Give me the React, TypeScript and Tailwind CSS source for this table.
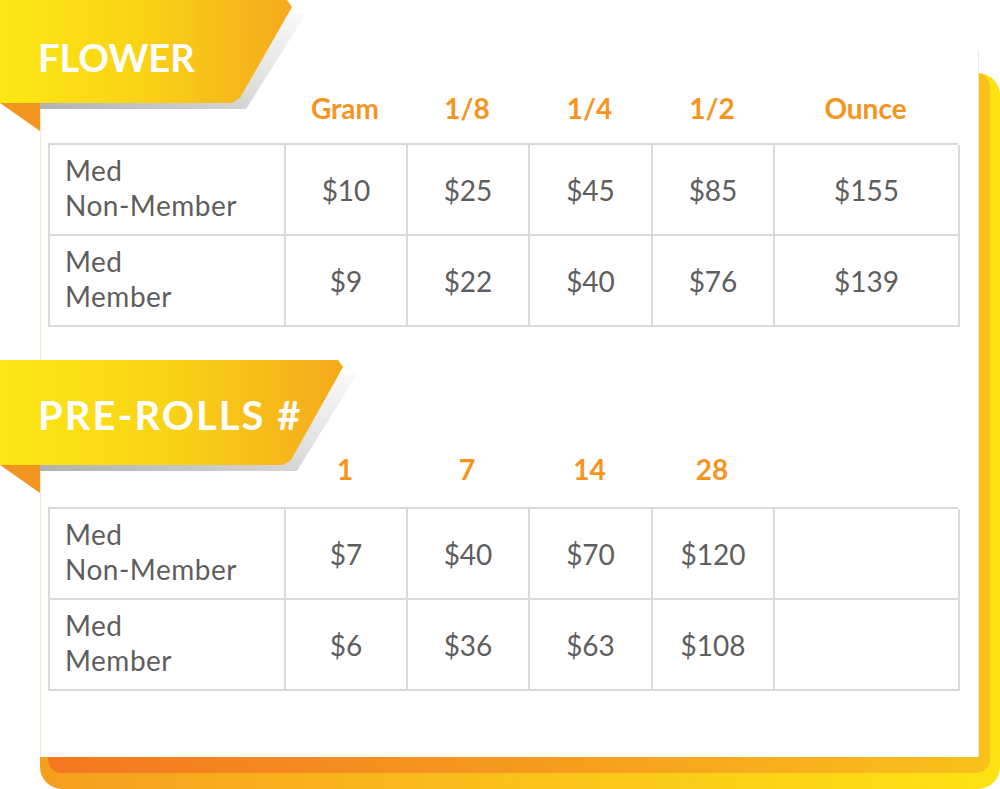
import React from "react";

const COLS = "grid-cols-[236px_122px_122px_123px_122px_185px]";

function Ribbon({
  title,
  width,
  height,
  textClass,
}: {
  title: string;
  width: number;
  height: number;
  textClass: string;
}) {
  const slant = 52;
  const poly = `polygon(0 0, ${width - 5}px 0, ${width}px 7px, ${width - slant}px ${height - 5}px, ${width - slant - 8}px ${height}px, 0 ${height}px)`;
  const shadowPoly = `polygon(40px 0, ${width + 14}px 14px, ${width - slant + 6}px ${height + 6}px, 40px ${height + 6}px)`;
  return (
    <div className="relative -ml-[41px] shrink-0" style={{ width: width + 20, height }}>
      <div
        className="absolute inset-0 bg-linear-to-tr from-[#a9a9a9] via-[#dedede] to-[#ffffff]"
        style={{ clipPath: shadowPoly, width: width + 20, height: height + 8 }}
      />
      <div
        className="absolute left-0 top-0 bg-linear-to-r from-[#fce815] via-[#f9d216] to-[#f5a91c] flex items-center pl-[38px]"
        style={{ clipPath: poly, width, height }}
      >
        <span className={`text-white font-bold leading-none ${textClass}`}>{title}</span>
      </div>
      <div className="absolute left-0 top-full w-[40px] h-[28px] bg-[#f3961f] [clip-path:polygon(0_0,100%_0,100%_100%)]" />
    </div>
  );
}

function HeaderRow({ labels }: { labels: string[] }) {
  return (
    <div className={`grid ${COLS} ml-[7px] w-[910px] h-[32px] items-center text-[#f7941d] font-bold text-[28px]`}>
      <div />
      {labels.map((l, i) => (
        <div key={i} className="text-center leading-none">
          {l}
        </div>
      ))}
    </div>
  );
}

function PriceTable({ rows }: { rows: { label: [string, string]; prices: string[] }[] }) {
  return (
    <div className={`grid ${COLS} ml-[7px] w-[910px] border-t-2 border-l-2 border-[#dadada] text-[#5e5e5e]`}>
      {rows.map((r, ri) => (
        <React.Fragment key={ri}>
          <div className="h-[91px] border-r-2 border-b-2 border-[#dadada] flex flex-col justify-center pl-[15px] pb-[4px] text-[28px] leading-[35px] tracking-[0.5px]">
            <span>{r.label[0]}</span>
            <span>{r.label[1]}</span>
          </div>
          {r.prices.map((p, pi) => (
            <div
              key={pi}
              className="h-[91px] border-r-2 border-b-2 border-[#dadada] flex items-center justify-center text-[28px]"
            >
              {p}
            </div>
          ))}
        </React.Fragment>
      ))}
    </div>
  );
}

export default function App() {
  return (
    <div className="relative w-[1000px] h-[789px] bg-white overflow-hidden font-['Lato',sans-serif]">
      {/* frame layers behind card */}
      <div className="absolute left-[40px] top-[73px] right-0 bottom-0 rounded-[22px] bg-linear-to-r from-[#f59e1f] to-[#fde312]" />
      <div className="absolute left-[48px] top-[73px] right-[10px] bottom-[16px] rounded-[14px] bg-linear-to-r from-[#f37720] via-[#f59a1e] to-[#f9c11a]" />

      <div className="relative ml-[40px] mt-[50px] w-[939px] h-[707px] bg-white border-x border-[#f8e6cf] flex flex-col">
        <div className="-mt-[50px]">
          <Ribbon title="FLOWER" width={292} height={103} textClass="text-[38px] pt-[10px]" />
        </div>
        <div className="-mt-[11px]">
          <HeaderRow labels={["Gram", "1/8", "1/4", "1/2", "Ounce"]} />
        </div>
        <div className="mt-[19px]">
          <PriceTable
            rows={[
              { label: ["Med", "Non-Member"], prices: ["$10", "$25", "$45", "$85", "$155"] },
              { label: ["Med", "Member"], prices: ["$9", "$22", "$40", "$76", "$139"] },
            ]}
          />
        </div>

        <div className="mt-[33px]">
          <Ribbon title="PRE-ROLLS #" width={343} height={105} textClass="text-[40px] tracking-[2px] pt-[4px]" />
        </div>
        <div className="-mt-[12px]">
          <HeaderRow labels={["1", "7", "14", "28", ""]} />
        </div>
        <div className="mt-[22px]">
          <PriceTable
            rows={[
              { label: ["Med", "Non-Member"], prices: ["$7", "$40", "$70", "$120", ""] },
              { label: ["Med", "Member"], prices: ["$6", "$36", "$63", "$108", ""] },
            ]}
          />
        </div>
      </div>
    </div>
  );
}
